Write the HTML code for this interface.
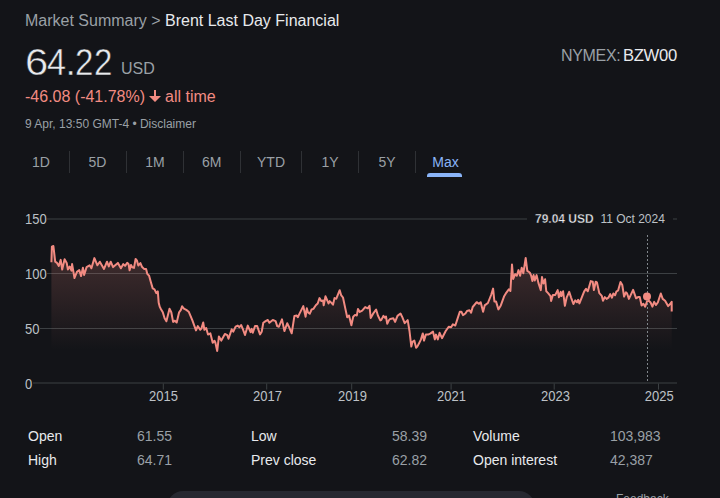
<!DOCTYPE html>
<html><head><meta charset="utf-8">
<style>
html,body{margin:0;padding:0;background:#131418;width:720px;height:498px;overflow:hidden;}
body{position:relative;font-family:"Liberation Sans",sans-serif;color:#e8eaed;}
.a{position:absolute;white-space:nowrap;line-height:1;}
.g{color:#9aa0a6;}
.big{position:absolute;top:44px;font-size:37px;line-height:37px;color:#e8eaed;transform-origin:0 0;-webkit-text-stroke:0.5px #131418;}
.w{color:#e8eaed;}
.tab{position:absolute;top:155px;font-size:14px;line-height:14px;color:#9aa0a6;transform:translateX(-50%);white-space:nowrap;}
.sep{position:absolute;top:151px;width:1px;height:22px;background:#2f3135;}
.yl{position:absolute;left:25px;font-size:13px;line-height:13px;color:#bdc1c6;transform:scaleY(1.1);transform-origin:0 0;}
.xl{position:absolute;top:389px;font-size:13px;line-height:13px;color:#bdc1c6;transform:translateX(-50%) scaleY(1.1);transform-origin:0 0;}
.sl{position:absolute;font-size:14px;line-height:14px;color:#e8eaed;}
.sv{position:absolute;font-size:14px;line-height:14px;color:#9aa0a6;}
</style></head><body>
<div class="a" style="left:25px;top:13px;font-size:16px;"><span class="g">Market Summary &gt; </span><span class="w">Brent Last Day Financial</span></div>
<div class="big" style="left:25px;transform:scaleX(1.13)">6</div><div class="big" style="left:46.5px;transform:scaleX(0.925)">4</div><div class="big" style="left:65.4px">.</div><div class="big" style="left:75px;transform:scaleX(0.895)">2</div><div class="big" style="left:94px;transform:scaleX(0.895)">2</div>
<div class="a g" style="left:121px;top:61px;font-size:16px;">USD</div>
<div class="a" style="right:43.5px;top:48px;font-size:16px;"><span class="g" style="letter-spacing:-0.3px">NYMEX: </span><span class="w" style="letter-spacing:-0.3px;display:inline-block;transform:scaleX(1.04);transform-origin:100% 50%">BZW00</span></div>
<div class="a" style="left:25px;top:89px;font-size:16px;color:#f28b82;">-46.08 (-41.78%)</div>
<svg style="position:absolute;left:149px;top:90px" width="12" height="12" viewBox="0 0 12 12"><path d="M5 0h2v6h5l-6 6l-6-6h5z" fill="#f28b82"/></svg>
<div class="a" style="left:165px;top:89px;font-size:16px;color:#f28b82;">all time</div>
<div class="a g" style="left:25px;top:118px;font-size:12px;">9 Apr, 13:50 GMT-4 • Disclaimer</div>

<div class="tab" style="left:41px">1D</div>
<div class="tab" style="left:97.5px">5D</div>
<div class="tab" style="left:155px">1M</div>
<div class="tab" style="left:211.7px">6M</div>
<div class="tab" style="left:271px">YTD</div>
<div class="tab" style="left:330px">1Y</div>
<div class="tab" style="left:387px">5Y</div>
<div class="tab" style="left:445.5px;color:#8ab4f8">Max</div>
<div class="sep" style="left:69px"></div>
<div class="sep" style="left:126px"></div>
<div class="sep" style="left:183px"></div>
<div class="sep" style="left:240px"></div>
<div class="sep" style="left:301px"></div>
<div class="sep" style="left:358px"></div>
<div class="sep" style="left:415px"></div>
<div style="position:absolute;left:427px;top:173px;width:35px;height:4px;background:#8ab4f8;border-radius:3px 3px 0 0"></div>

<svg style="position:absolute;left:0;top:0" width="720" height="498" viewBox="0 0 720 498">
<defs><linearGradient id="fg" x1="0" y1="246" x2="0" y2="350" gradientUnits="userSpaceOnUse">
<stop offset="0" stop-color="#f28b82" stop-opacity="0.22"/><stop offset="1" stop-color="#f28b82" stop-opacity="0"/></linearGradient></defs>
<g stroke="#3c4043" stroke-width="1">
<line x1="47" y1="219" x2="677" y2="219"/>
<line x1="47" y1="273.5" x2="677" y2="273.5"/>
<line x1="40" y1="328.5" x2="677" y2="328.5"/>
<line x1="33" y1="383" x2="677" y2="383"/>
<line x1="163.3" y1="383.5" x2="163.3" y2="389.6"/>
<line x1="266.7" y1="383.5" x2="266.7" y2="389.6"/>
<line x1="351.7" y1="383.5" x2="351.7" y2="389.6"/>
<line x1="451.1" y1="383.5" x2="451.1" y2="389.6"/>
<line x1="554.2" y1="383.5" x2="554.2" y2="389.6"/>
<line x1="658.5" y1="383.5" x2="658.5" y2="389.6"/>
</g>
<path d="M51.4,262.3 L51.9,246.6 L53.4,246 L55.2,261.7 L57,262.9 L58.8,265.9 L60.7,259.9 L62.2,269.5 L64.6,259.3 L66.7,262.9 L67.9,269.5 L69.7,266.5 L71.5,270.7 L72.1,264.1 L74.5,278 L76.9,271.9 L79.3,270.1 L81.1,276.1 L82.9,267.7 L84.1,274.9 L86.6,267.1 L89.6,265.3 L91.4,268.3 L94.4,258.1 L97.4,265.3 L99.8,261.7 L104,268.9 L107,261.7 L108.8,266.5 L110.7,261.7 L113.1,267.1 L117.9,262.9 L120.9,268.3 L123.3,264.1 L125.1,265.9 L127.2,262.8 L128.6,264.3 L129.6,270.3 L131,264.9 L132.2,267.3 L134,267.9 L135.6,258.9 L137,260.7 L138.3,265.5 L140.4,263.1 L141.9,266.7 L144.3,269.1 L146.1,269.1 L147.3,273.9 L149.1,275.7 L150.9,282.3 L152.7,288.4 L154.5,289.3 L156.3,293.2 L157.8,291.4 L158.7,302.8 L159.8,306.9 L161,309.3 L162.8,312.3 L164.6,318.3 L166.4,321.3 L169.5,308.7 L171.3,312.3 L173.1,321.9 L174.9,320.7 L176.7,322.5 L179.1,312.3 L180.9,309.9 L182.1,306.3 L183.9,308.7 L186.3,309.9 L188.7,311.7 L192.3,320.1 L196,330.4 L197.8,326.1 L200.2,329.8 L201.4,328.6 L203.2,322.5 L204.4,329.8 L206.2,328 L208,334.6 L210.4,333.4 L212.7,342.7 L214.5,340.8 L215.4,342.7 L217.2,351 L218.9,336.4 L221.3,340.6 L224.9,334 L227.3,335.2 L228.5,338.8 L231.7,329.4 L233.3,331.7 L235.6,326.7 L237.8,325.6 L239.4,327.2 L241.1,325 L242.8,328.9 L245,335 L247.8,325.6 L249.4,329.4 L250.6,332.2 L251.7,328.9 L252.8,332.8 L255,326.1 L257.2,326.1 L260,334.4 L261.7,331.7 L263.3,322.8 L265.6,321.1 L267.8,320 L269.4,322.8 L272.8,320 L275.6,321.1 L277.2,326.1 L278.9,326.7 L282,319.4 L284.4,331.1 L287.2,323.3 L288.9,326.7 L291.7,333.3 L294.4,316.1 L296.7,315.6 L297.8,317.2 L299.4,313.9 L303.3,306.1 L305.6,316.7 L306.8,308.3 L308,312.5 L309.8,313.7 L311.6,309.5 L313.4,308.9 L315.8,305.3 L317.7,303.5 L319.5,298.1 L321.3,301.1 L323.1,300.5 L323.7,305.3 L325.5,296.3 L327.3,300.5 L328.5,303.5 L329.7,301.1 L331.5,302.9 L333,304.7 L334.5,298.1 L336.3,298.7 L337.5,295.7 L339.7,290.2 L341.1,295.1 L343,297.5 L345.4,308.9 L347.2,317.3 L349,315.5 L351.4,325.2 L353.2,316.7 L355,314.9 L356.8,315.5 L358,308.9 L359.8,311.9 L362.2,310.7 L365.2,307.1 L367.7,308.3 L369.5,305.9 L370.7,318 L373.1,313.7 L376.1,309.5 L377.9,315.5 L380.3,320.4 L381.2,320.1 L383.4,315.9 L384.8,317.7 L386,316.5 L387.2,323.7 L389,320.1 L390.2,318.9 L393.3,318.3 L395.1,321.9 L397.5,315.9 L400.5,313.5 L402.3,317.1 L404.7,323.1 L407.7,320.1 L409.5,331 L411.3,346.6 L412.5,341.8 L414.3,340.6 L416.1,347.8 L417.3,346.6 L419.2,343 L421,339.4 L422.8,333.4 L424,340.6 L425.8,334.6 L428.2,334.6 L430.6,333.4 L433,331.6 L434.8,339.4 L436,334.6 L437.8,339.4 L439.6,332.8 L442,338.2 L445.7,331 L448.7,326.7 L451.1,327.3 L452.9,324.3 L455.3,325.5 L457.4,319.1 L459.8,311.8 L461.4,311.8 L463,315.1 L465.4,313.5 L467,311 L469.5,310.2 L471.1,312.7 L472.7,307 L476.7,302.2 L479.1,303.8 L480.7,302.2 L483.1,311.8 L484.7,305.4 L487.9,303 L491.1,295 L493.1,288.6 L494.4,301.4 L496,301.4 L498.4,309.4 L500.8,305.4 L504,296.6 L506.4,292.6 L508.8,289.4 L510.4,291 L512,264.5 L513.2,278.9 L515.2,274.1 L516.8,275.7 L518.5,270.1 L520.1,275.7 L521.7,267.7 L523.3,273.3 L525.7,258 L527.3,270.9 L529.7,272.5 L531.2,275.7 L532.4,281.1 L533.6,275.1 L534.8,280.5 L536.6,275.1 L538.4,282.9 L540.8,290.1 L542,276.9 L543.5,283.5 L545.1,279.3 L546.3,291.3 L548.1,293.1 L550.5,296.1 L551.1,301 L552.9,294.9 L555.3,294.9 L557.7,290.1 L558.9,297.3 L560.7,291.9 L561.3,296.1 L563.1,291.3 L564.9,305.8 L566.7,297.3 L569.2,291.9 L571,297.3 L573.4,304 L575.2,300.4 L577,302.2 L578.2,299.8 L579.4,303.4 L581.8,297.3 L584.2,291.3 L586,288.9 L587.8,291.3 L590.8,281.1 L592.7,281.7 L593.9,290.1 L595.7,281.7 L596.9,282.3 L599.3,293.1 L601.8,295.9 L603,300.7 L604.8,297.1 L606.6,298.9 L608.4,297.7 L610.2,294.1 L612,297.7 L613.3,293.5 L615.1,295.3 L616.3,291.7 L618.1,290.5 L620.5,282 L622.3,285.1 L624.1,296.5 L625.9,292.3 L627.1,293.5 L628.9,298.9 L633.1,289.9 L636.1,298.3 L638,297.1 L639.8,297.1 L641.6,305.5 L643.4,303.7 L645.2,306.7 L647,301.3 L648.8,300.7 L650.6,302.5 L652.4,306.7 L654.2,301.9 L656,304.9 L657.8,302.5 L660.8,293.5 L662.7,298.9 L665.1,300.7 L668.1,306.1 L669.9,304.3 L671.7,301.9 L671.7,311.6 L671.7,350 L51.4,350 Z" fill="url(#fg)"/>
<path d="M51.4,262.3 L51.9,246.6 L53.4,246 L55.2,261.7 L57,262.9 L58.8,265.9 L60.7,259.9 L62.2,269.5 L64.6,259.3 L66.7,262.9 L67.9,269.5 L69.7,266.5 L71.5,270.7 L72.1,264.1 L74.5,278 L76.9,271.9 L79.3,270.1 L81.1,276.1 L82.9,267.7 L84.1,274.9 L86.6,267.1 L89.6,265.3 L91.4,268.3 L94.4,258.1 L97.4,265.3 L99.8,261.7 L104,268.9 L107,261.7 L108.8,266.5 L110.7,261.7 L113.1,267.1 L117.9,262.9 L120.9,268.3 L123.3,264.1 L125.1,265.9 L127.2,262.8 L128.6,264.3 L129.6,270.3 L131,264.9 L132.2,267.3 L134,267.9 L135.6,258.9 L137,260.7 L138.3,265.5 L140.4,263.1 L141.9,266.7 L144.3,269.1 L146.1,269.1 L147.3,273.9 L149.1,275.7 L150.9,282.3 L152.7,288.4 L154.5,289.3 L156.3,293.2 L157.8,291.4 L158.7,302.8 L159.8,306.9 L161,309.3 L162.8,312.3 L164.6,318.3 L166.4,321.3 L169.5,308.7 L171.3,312.3 L173.1,321.9 L174.9,320.7 L176.7,322.5 L179.1,312.3 L180.9,309.9 L182.1,306.3 L183.9,308.7 L186.3,309.9 L188.7,311.7 L192.3,320.1 L196,330.4 L197.8,326.1 L200.2,329.8 L201.4,328.6 L203.2,322.5 L204.4,329.8 L206.2,328 L208,334.6 L210.4,333.4 L212.7,342.7 L214.5,340.8 L215.4,342.7 L217.2,351 L218.9,336.4 L221.3,340.6 L224.9,334 L227.3,335.2 L228.5,338.8 L231.7,329.4 L233.3,331.7 L235.6,326.7 L237.8,325.6 L239.4,327.2 L241.1,325 L242.8,328.9 L245,335 L247.8,325.6 L249.4,329.4 L250.6,332.2 L251.7,328.9 L252.8,332.8 L255,326.1 L257.2,326.1 L260,334.4 L261.7,331.7 L263.3,322.8 L265.6,321.1 L267.8,320 L269.4,322.8 L272.8,320 L275.6,321.1 L277.2,326.1 L278.9,326.7 L282,319.4 L284.4,331.1 L287.2,323.3 L288.9,326.7 L291.7,333.3 L294.4,316.1 L296.7,315.6 L297.8,317.2 L299.4,313.9 L303.3,306.1 L305.6,316.7 L306.8,308.3 L308,312.5 L309.8,313.7 L311.6,309.5 L313.4,308.9 L315.8,305.3 L317.7,303.5 L319.5,298.1 L321.3,301.1 L323.1,300.5 L323.7,305.3 L325.5,296.3 L327.3,300.5 L328.5,303.5 L329.7,301.1 L331.5,302.9 L333,304.7 L334.5,298.1 L336.3,298.7 L337.5,295.7 L339.7,290.2 L341.1,295.1 L343,297.5 L345.4,308.9 L347.2,317.3 L349,315.5 L351.4,325.2 L353.2,316.7 L355,314.9 L356.8,315.5 L358,308.9 L359.8,311.9 L362.2,310.7 L365.2,307.1 L367.7,308.3 L369.5,305.9 L370.7,318 L373.1,313.7 L376.1,309.5 L377.9,315.5 L380.3,320.4 L381.2,320.1 L383.4,315.9 L384.8,317.7 L386,316.5 L387.2,323.7 L389,320.1 L390.2,318.9 L393.3,318.3 L395.1,321.9 L397.5,315.9 L400.5,313.5 L402.3,317.1 L404.7,323.1 L407.7,320.1 L409.5,331 L411.3,346.6 L412.5,341.8 L414.3,340.6 L416.1,347.8 L417.3,346.6 L419.2,343 L421,339.4 L422.8,333.4 L424,340.6 L425.8,334.6 L428.2,334.6 L430.6,333.4 L433,331.6 L434.8,339.4 L436,334.6 L437.8,339.4 L439.6,332.8 L442,338.2 L445.7,331 L448.7,326.7 L451.1,327.3 L452.9,324.3 L455.3,325.5 L457.4,319.1 L459.8,311.8 L461.4,311.8 L463,315.1 L465.4,313.5 L467,311 L469.5,310.2 L471.1,312.7 L472.7,307 L476.7,302.2 L479.1,303.8 L480.7,302.2 L483.1,311.8 L484.7,305.4 L487.9,303 L491.1,295 L493.1,288.6 L494.4,301.4 L496,301.4 L498.4,309.4 L500.8,305.4 L504,296.6 L506.4,292.6 L508.8,289.4 L510.4,291 L512,264.5 L513.2,278.9 L515.2,274.1 L516.8,275.7 L518.5,270.1 L520.1,275.7 L521.7,267.7 L523.3,273.3 L525.7,258 L527.3,270.9 L529.7,272.5 L531.2,275.7 L532.4,281.1 L533.6,275.1 L534.8,280.5 L536.6,275.1 L538.4,282.9 L540.8,290.1 L542,276.9 L543.5,283.5 L545.1,279.3 L546.3,291.3 L548.1,293.1 L550.5,296.1 L551.1,301 L552.9,294.9 L555.3,294.9 L557.7,290.1 L558.9,297.3 L560.7,291.9 L561.3,296.1 L563.1,291.3 L564.9,305.8 L566.7,297.3 L569.2,291.9 L571,297.3 L573.4,304 L575.2,300.4 L577,302.2 L578.2,299.8 L579.4,303.4 L581.8,297.3 L584.2,291.3 L586,288.9 L587.8,291.3 L590.8,281.1 L592.7,281.7 L593.9,290.1 L595.7,281.7 L596.9,282.3 L599.3,293.1 L601.8,295.9 L603,300.7 L604.8,297.1 L606.6,298.9 L608.4,297.7 L610.2,294.1 L612,297.7 L613.3,293.5 L615.1,295.3 L616.3,291.7 L618.1,290.5 L620.5,282 L622.3,285.1 L624.1,296.5 L625.9,292.3 L627.1,293.5 L628.9,298.9 L633.1,289.9 L636.1,298.3 L638,297.1 L639.8,297.1 L641.6,305.5 L643.4,303.7 L645.2,306.7 L647,301.3 L648.8,300.7 L650.6,302.5 L652.4,306.7 L654.2,301.9 L656,304.9 L657.8,302.5 L660.8,293.5 L662.7,298.9 L665.1,300.7 L668.1,306.1 L669.9,304.3 L671.7,301.9 L671.7,311.6" fill="none" stroke="#f28b82" stroke-width="2" stroke-linejoin="round"/>
<line x1="647.5" y1="235" x2="647.5" y2="381" stroke="#80868b" stroke-width="1" stroke-dasharray="2 2"/>
<rect x="527" y="203" width="146" height="29" fill="#131418"/>
<circle cx="647" cy="296.5" r="4" fill="#f28b82"/>
</svg>
<div class="a" style="left:535px;top:213px;font-size:12px;"><b class="w" style="-webkit-text-stroke:0.35px #131418">79.04 USD</b>&nbsp; <span style="color:#bdc1c6">11 Oct 2024</span></div>

<div class="yl" style="top:212px">150</div>
<div class="yl" style="top:267px">100</div>
<div class="yl" style="top:322px">50</div>
<div class="yl" style="top:377px">0</div>
<div class="xl" style="left:163.5px">2015</div>
<div class="xl" style="left:267.5px">2017</div>
<div class="xl" style="left:352.5px">2019</div>
<div class="xl" style="left:451.5px">2021</div>
<div class="xl" style="left:555.5px">2023</div>
<div class="xl" style="left:659.2px">2025</div>

<div class="sl" style="left:28px;top:429px">Open</div>
<div class="sv" style="left:137px;top:429px">61.55</div>
<div class="sl" style="left:251px;top:429px">Low</div>
<div class="sv" style="left:392px;top:429px">58.39</div>
<div class="sl" style="left:473px;top:429px">Volume</div>
<div class="sv" style="left:610px;top:429px">103,983</div>
<div class="sl" style="left:28px;top:453px">High</div>
<div class="sv" style="left:137px;top:453px">64.71</div>
<div class="sl" style="left:251px;top:453px">Prev close</div>
<div class="sv" style="left:392px;top:453px">62.82</div>
<div class="sl" style="left:473px;top:453px">Open interest</div>
<div class="sv" style="left:610px;top:453px">42,387</div>

<div style="position:absolute;left:167px;top:491px;width:368px;height:40px;border-radius:16px;background:#262830"></div>
<div class="a g" style="left:616px;top:493px;font-size:12px;">Feedback</div>
</body></html>
